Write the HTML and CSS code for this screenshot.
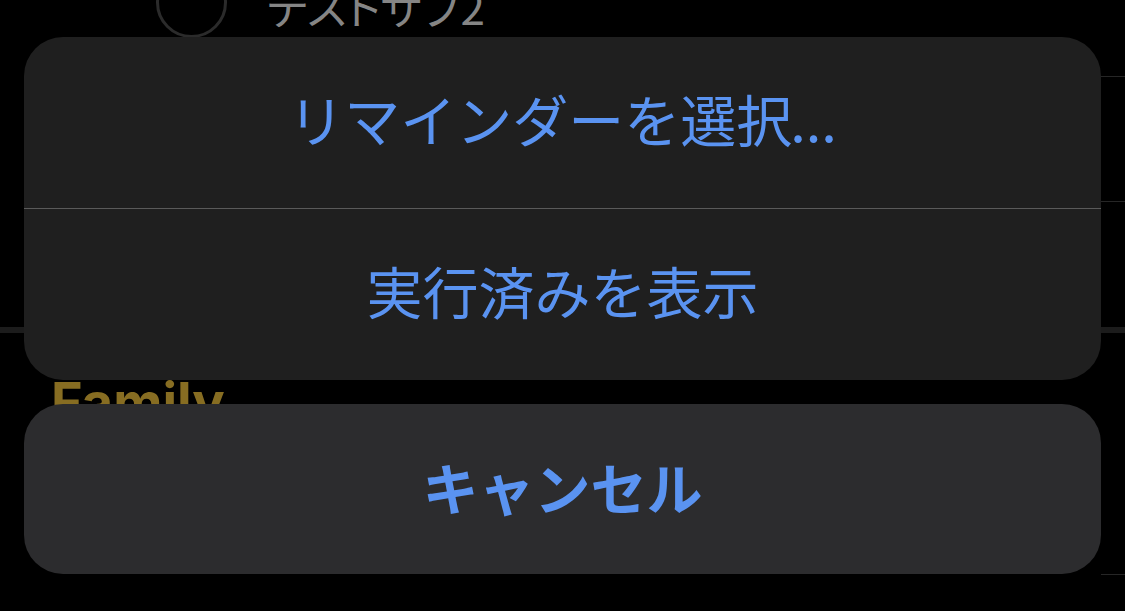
FILE: index.html
```html
<!DOCTYPE html>
<html lang="ja">
<head>
<meta charset="utf-8">
<link rel="stylesheet" href="styles.css">
</head>
<body>
<div class="screen">
  <div class="list">
    <div class="row row-first">
      <span class="check"></span>
      <span class="row-title">テストサブ2</span>
    </div>
    <div class="row row-plain"></div>
    <div class="row row-plain row-last"></div>
    <div class="section-gap"></div>
    <h2 class="section-title">Family</h2>
    <div class="row row-family"></div>
  </div>

  <div class="sheet">
    <div class="group">
      <div class="action action-first">リマインダーを選択<span class="ellipsis">...</span></div>
      <div class="divider"></div>
      <div class="action">実行済みを表示</div>
    </div>
    <div class="cancel">キャンセル</div>
  </div>
</div>
</body>
</html>
```

FILE: styles.css
```css
html, body {
  margin: 0;
  padding: 0;
  background: #000;
}

.screen {
  position: relative;
  width: 1125px;
  height: 611px;
  overflow: hidden;
  background: #000;
  font-family: "Noto Sans CJK JP", "Noto Sans", sans-serif;
}

/* underlying list */
.list {
  display: flex;
  flex-direction: column;
  margin-top: -35px;
}

.row {
  display: flex;
  box-sizing: border-box;
  border-bottom: 1px solid #262626;
  margin-left: 265px;
}

.row-first {
  height: 112px;
  margin-left: 0;
  padding-left: 156px;
  align-items: flex-start;
  gap: 40px;
  border-bottom: none;
  position: relative;
}

.row-first::after {
  content: "";
  position: absolute;
  left: 265px;
  right: 0;
  bottom: 0;
  height: 1px;
  background: #262626;
}

.check {
  width: 71px;
  height: 71px;
  margin-top: 2px;
  box-sizing: border-box;
  border: 3px solid #2b2b2b;
  border-radius: 50%;
  flex: none;
}

.row-title {
  color: #858585;
  font-size: 44px;
  line-height: 1;
  margin-top: 19px;
  font-feature-settings: "palt";
}

.row-plain {
  height: 125px;
}

.row-last {
  border-bottom: none;
}

.section-gap {
  height: 6px;
  background: #1c1c1c;
}

.section-title {
  margin: 42px 0 0 51px;
  font-family: "Inter", "Liberation Sans", sans-serif;
  font-weight: 700;
  font-size: 54px;
  line-height: 1;
  color: #876d22;
  height: 99px;
}

.row-family {
  height: 101px;
  margin-left: 1101px;
}

/* action sheet */
.sheet {
  position: absolute;
  left: 24px;
  top: 37px;
  width: 1077px;
  display: flex;
  flex-direction: column;
  gap: 24px;
}

.group {
  background: #1f1f1f;
  border-radius: 39px;
  overflow: hidden;
  display: flex;
  flex-direction: column;
}

.action {
  height: 171px;
  box-sizing: border-box;
  padding-bottom: 9px;
  display: flex;
  align-items: center;
  justify-content: center;
  color: #5a93f1;
  font-size: 56px;
  line-height: 1;
}

.action-first .ellipsis {
  margin-left: -2px;
}

.divider {
  height: 1px;
  background: #5a5a5a;
}

.cancel {
  height: 170px;
  box-sizing: border-box;
  padding-bottom: 6px;
  background: #2c2c2e;
  border-radius: 39px;
  display: flex;
  align-items: center;
  justify-content: center;
  color: #5a93f1;
  font-size: 56px;
  font-weight: 700;
  line-height: 1;
}
```
